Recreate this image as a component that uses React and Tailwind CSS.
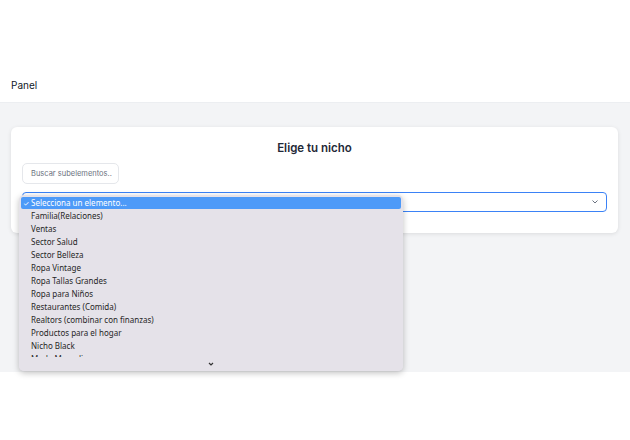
import React from "react";

const items = [
  "Familia(Relaciones)",
  "Ventas",
  "Sector Salud",
  "Sector Belleza",
  "Ropa Vintage",
  "Ropa Tallas Grandes",
  "Ropa para Niños",
  "Restaurantes (Comida)",
  "Realtors (combinar con finanzas)",
  "Productos para el hogar",
  "Nicho Black",
  "Moda Masculina",
];

export default function App() {
  return (
    <div className="w-[630px] h-[440px] bg-white relative overflow-hidden" style={{ fontFamily: "Inter, 'Noto Sans', sans-serif" }}>
      <header className="h-[103px] bg-white flex items-end pb-[12px] px-[11px] shadow-[0_1px_2px_rgba(0,0,0,0.06)] border-b border-[#eceef1]">
        <span className="text-[10px] text-[#111827] leading-none">Panel</span>
      </header>
      <main className="h-[269px] bg-[#f3f4f6] pt-[24px] pl-[11px] pr-[12px]">
        <div className="bg-white rounded-[6px] shadow-[0_1px_4px_rgba(0,0,0,0.1)] px-[11px] pt-[13px] pb-[21px]">
          <h2 className="text-center text-[11.5px] font-semibold text-[#1f2937] leading-[16px]">Elige tu nicho</h2>
          <div className="mt-[7px] w-[97px] h-[21px] border border-[#e5e7eb] rounded-[5px] flex items-center pl-[8px]">
            <span className="text-[7.5px] text-[#6b7280]">Buscar subelementos..</span>
          </div>
          <div className="mt-[8px] h-[20px] border-[1.5px] border-[#3b82f6] rounded-[4px] flex items-center justify-end pr-[7px]">
            <svg width="8" height="6" viewBox="0 0 8 6" fill="none">
              <path d="M1.5 1.5 L4 4 L6.5 1.5" stroke="#6b7280" strokeWidth="1" />
            </svg>
          </div>
        </div>
      </main>

      <div className="absolute left-[19px] top-[195px] w-[384px] h-[176px] bg-[#e5e2e9] rounded-[5px] shadow-[0_2px_6px_rgba(0,0,0,0.25)] px-[2px] pt-[2px] overflow-hidden" style={{ fontFamily: "'Noto Sans', Inter, sans-serif" }}>
        <div className="h-[12px] bg-[#4d9af8] rounded-[2px] flex items-center pl-[2px] text-white text-[8px] leading-none">
          <span className="w-[8px] text-[7px]">✓</span>
          <span>Selecciona un elemento...</span>
        </div>
        <div className="h-[158px] overflow-hidden">
          {items.map((t) => (
            <div key={t} className="h-[13px] flex items-center pl-[10px] text-[8px] text-[#262626] leading-none">
              {t}
            </div>
          ))}
        </div>
        <div className="absolute left-0 right-0 bottom-0 h-[14px] bg-[#e5e2e9] flex items-center justify-center">
          <svg width="6" height="4" viewBox="0 0 6 4" fill="none">
            <path d="M1 1 L3 3 L5 1" stroke="#333" strokeWidth="1.2" />
          </svg>
        </div>
      </div>
    </div>
  );
}
